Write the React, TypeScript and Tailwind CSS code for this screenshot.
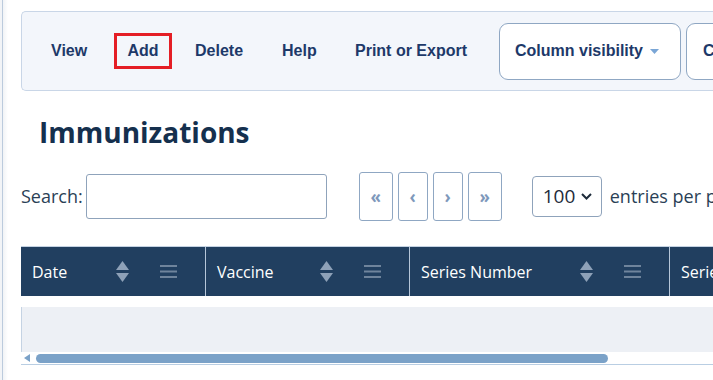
import React from 'react';

const navItems = [
  { label: 'View', width: 'w-[63px]' },
  { label: 'Add', width: 'w-[58px]' },
  { label: 'Delete', width: 'w-[87px]' },
  { label: 'Help', width: 'w-[73px]' },
  { label: 'Print or Export', width: 'w-[144px]' },
];

const SortIcon = () => (
  <svg width="13" height="21" viewBox="0 0 13 21" className="shrink-0">
    <path d="M6.5 0 L13 9 L0 9 Z" fill="#8ea1b8" />
    <path d="M0 12 L13 12 L6.5 21 Z" fill="#8ea1b8" />
  </svg>
);

const MenuIcon = () => (
  <svg width="17" height="13" viewBox="0 0 17 13" className="shrink-0">
    <rect x="0" y="0" width="17" height="2" fill="#6f849c" />
    <rect x="0" y="5.5" width="17" height="2" fill="#6f849c" />
    <rect x="0" y="11" width="17" height="2" fill="#6f849c" />
  </svg>
);

const columns = [
  { label: 'Date', width: 'w-[184px]' },
  { label: 'Vaccine', width: 'w-[204px]' },
  { label: 'Series Number', width: 'w-[260px]' },
  { label: 'Series Total', width: 'w-[200px]' },
];

const App: React.FC = () => {
  return (
    <div className="flex w-[713px] h-[380px] overflow-hidden bg-white">
      {/* left edge */}
      <div className="flex shrink-0">
        <div className="w-[2px] bg-[#f2f4f7]" />
        <div className="w-[1px] bg-[#bccbdd]" />
        <div className="w-[5px] bg-gradient-to-r from-[#f1f3f6] to-white" />
      </div>

      <div className="flex flex-col pl-[13px] shrink-0" style={{ fontFamily: '"Open Sans", sans-serif' }}>
        {/* toolbar */}
        <div
          className="mt-[11px] h-[80px] w-[900px] flex items-center bg-[#f3f6fb] border border-r-0 border-[#c9d6e7] rounded-l-[5px] pl-[29px]"
          style={{ fontFamily: '"Liberation Sans", Arial, sans-serif' }}
        >
          {navItems.map((item) =>
            item.label === 'Add' ? (
              <span
                key={item.label}
                className={`${item.width} mr-[23px] h-[36px] shrink-0 flex items-center justify-center border-[3px] border-[#e41e25] text-[16px] font-bold text-[#1d3969]`}
              >
                {item.label}
              </span>
            ) : (
              <span
                key={item.label}
                className={`${item.width} shrink-0 whitespace-nowrap text-[16px] font-bold text-[#1d3969]`}
              >
                {item.label}
              </span>
            )
          )}
          <button className="h-[57px] w-[182px] shrink-0 flex items-center pl-[15px] bg-white border border-[#8fa7c3] rounded-[9px] text-[16px] font-bold text-[#1d3969]">
            Column visibility
            <svg width="9" height="5" viewBox="0 0 9 5" className="ml-[7px]">
              <path d="M0 0 L9 0 L4.5 5 Z" fill="#7aa6d6" />
            </svg>
          </button>
          <button className="ml-[5px] h-[57px] w-[160px] shrink-0 flex items-center pl-[16px] bg-white border border-[#8fa7c3] rounded-[9px] text-[16px] font-bold text-[#1d3969] whitespace-nowrap">
            Column order
          </button>
        </div>

        {/* title */}
        <h1 className="mt-[22px] ml-[18px] text-[28px] leading-[38px] font-bold text-[#15304e]">
          Immunizations
        </h1>

        {/* search / pager row */}
        <div className="mt-[21px] flex items-center h-[49px] text-[#2a3f56]">
          <label className="text-[18px] mr-[3px]">Search:</label>
          <div className="h-[45px] w-[241px] shrink-0 border border-[#8fa3bb] rounded-[3px] bg-white" />
          <div className="ml-[32px] flex gap-[5px]">
            {['«', '‹', '›', '»'].map((g, i) => (
              <div
                key={g}
                className={`h-[49px] ${i === 0 || i === 3 ? 'w-[34px]' : 'w-[30px]'} flex items-center justify-center border border-[#8fa7c3] rounded-[3px] text-[17px] font-bold text-[#7e98bb]`}
              >
                {g}
              </div>
            ))}
          </div>
          <div className="ml-[30px] h-[41px] w-[70px] shrink-0 flex items-center pl-[10px] border border-[#8fa3bb] rounded-[4px] bg-white">
            <span className="text-[19px] text-[#1d2b3a]">100</span>
            <svg width="11" height="7" viewBox="0 0 11 7" className="ml-[6px]">
              <path d="M1 1 L5.5 5.5 L10 1" stroke="#1d2b3a" strokeWidth="2" fill="none" />
            </svg>
          </div>
          <span className="ml-[8px] text-[18px] whitespace-nowrap">entries per page</span>
        </div>

        {/* table */}
        <div className="mt-[25px] flex h-[50px] bg-[#213f60] border-t border-[#c4d2e2]">
          {columns.map((c, i) => (
            <div
              key={c.label}
              className={`${c.width} shrink-0 flex items-center pl-[11px] text-[16px] text-white ${i > 0 ? 'border-l border-[#b6c6d9]' : ''}`}
            >
              <span className="whitespace-nowrap">{c.label}</span>
              <span className="flex-1" />
              <SortIcon />
              <span className="ml-[31px] mr-[28px]">
                <MenuIcon />
              </span>
            </div>
          ))}
        </div>
        <div className="mt-[11px] h-[45px] w-[800px] bg-[#edf0f5] border-l border-[#c5d3e3]" />
        <div className="flex items-center h-[12px] w-[800px]">
          <svg width="6" height="8" viewBox="0 0 6 8" className="ml-[3px]">
            <path d="M6 0 L6 8 L0 4 Z" fill="#7ba2c8" />
          </svg>
          <div className="ml-[6px] h-[9px] w-[572px] rounded-full bg-[#7ba2c8]" />
        </div>
        <div className="h-[1px] w-[800px] bg-[#b9cee3]" />
      </div>
    </div>
  );
};

export default App;
